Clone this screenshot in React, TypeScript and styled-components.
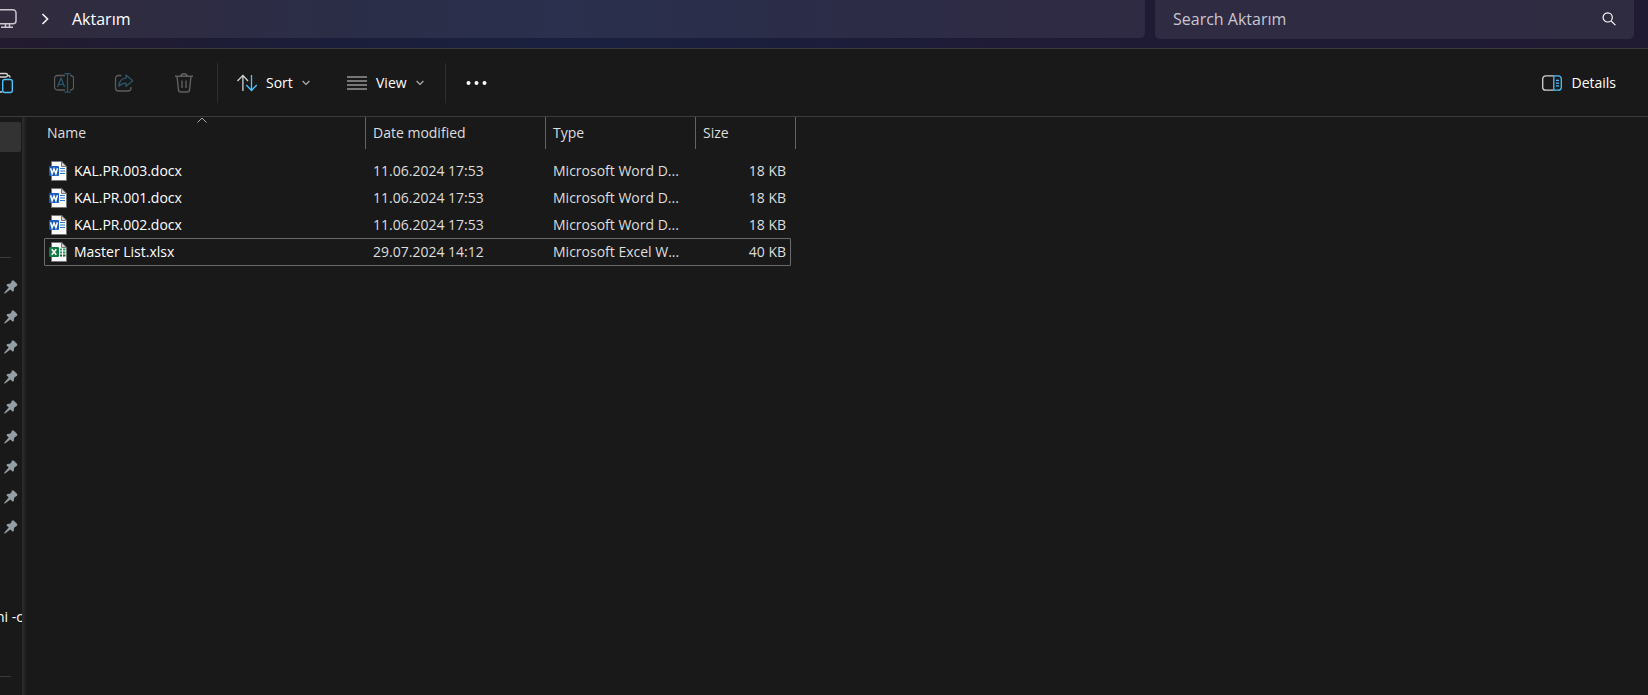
import React from "react";
import styled, { createGlobalStyle } from "styled-components";

const GlobalStyle = createGlobalStyle`
  * { box-sizing: border-box; }
  html, body, #root { height: 100%; }
  body {
    margin: 0;
    background: #191919;
    color: #fff;
    font-family: "Segoe UI", "Open Sans", "Noto Sans", sans-serif;
    font-size: 14px;
    line-height: 20px;
    overflow: hidden;
  }
  button, input { font: inherit; color: inherit; }
`;

const Window = styled.div`
  display: flex;
  flex-direction: column;
  min-height: 100vh;
`;

const TitleBar = styled.header`
  display: flex;
  align-items: flex-start;
  gap: 10px;
  height: 49px;
  padding-right: 14px;
  background: linear-gradient(90deg, #231b2f 0, #1f1c34 10%, #1b1e3a 20%, #1a2140 34%, #1b1e3b 48%, #201b36 62%, #201b33 100%);
  border-bottom: 1px solid #3b3b3d;
`;

const AddressBar = styled.nav`
  display: flex;
  align-items: center;
  flex: 1;
  height: 38px;
  gap: 23px;
  background: rgba(255, 255, 255, 0.07);
  border-radius: 0 0 5px 0;
`;

const Crumb = styled.a`
  color: #fff;
  font-size: 16px;
  line-height: 24px;
  text-decoration: none;
`;

const SearchBox = styled.label`
  display: flex;
  align-items: center;
  flex: 0 0 479px;
  height: 39px;
  padding: 0 18px 2px;
  background: rgba(255, 255, 255, 0.07);
  border-radius: 0 0 5px 5px;
`;

const SearchInput = styled.input`
  flex: 1;
  min-width: 0;
  padding: 0;
  border: 0;
  outline: 0;
  background: transparent;
  font-size: 16px;
  line-height: 24px;
  &::placeholder { color: #c9c7cf; opacity: 1; }
`;

const Toolbar = styled.div`
  display: flex;
  align-items: center;
  height: 68px;
  margin-left: -26px;
  padding-right: 32px;
  border-bottom: 1px solid #3b3b3b;
`;

const IconButton = styled.button`
  display: flex;
  align-items: center;
  justify-content: center;
  width: 60px;
  height: 40px;
  padding: 0;
  border: 0;
  background: transparent;
`;

const MenuButton = styled.button<{ $width?: number }>`
  display: flex;
  align-items: center;
  gap: 9px;
  width: ${(p) => (p.$width ? `${p.$width}px` : "auto")};
  height: 40px;
  padding: 0 0 0 19px;
  border: 0;
  background: transparent;
`;

const Separator = styled.span<{ $gap?: number }>`
  width: 1px;
  height: 40px;
  margin-left: ${(p) => p.$gap ?? 0}px;
  background: #2e2e2e;
`;

const Spacer = styled.span`
  flex: 1;
`;

const Body = styled.div`
  display: flex;
  flex: 1;
`;

const Sidebar = styled.aside`
  width: 22px;
  padding: 5px 1px 0 0;
  overflow: hidden;
`;

const SideItem = styled.div<{ $active?: boolean }>`
  display: flex;
  align-items: center;
  height: 30px;
  padding-left: 4px;
  background: ${(p) => (p.$active ? "#333" : "transparent")};
  border-radius: 0 2px 2px 0;
`;

const SideGap = styled.div<{ $height: number }>`
  height: ${(p) => p.$height}px;
`;

const SideRule = styled.hr`
  width: 11px;
  height: 1px;
  margin: 0;
  border: 0;
  background: #3b3b3b;
`;

const SideLabel = styled.span`
  margin-left: -8px;
  white-space: nowrap;
`;

const Splitter = styled.div`
  width: 4px;
  background: #222;
  border-left: 2px solid #292929;
`;

const Main = styled.main`
  flex: 1;
  padding-left: 18px;
`;

const FileTable = styled.table`
  width: 752px;
  table-layout: fixed;
  border-collapse: collapse;
  text-align: left;
`;

const HeadCell = styled.th<{ $first?: boolean }>`
  position: relative;
  padding: 0 0 8px;
  color: #dedede;
  font-weight: 400;
  > span {
    display: block;
    height: 32px;
    padding-left: ${(p) => (p.$first ? 3 : 7)}px;
    line-height: 32px;
    border-right: 1px solid #636363;
  }
`;

const SortMark = styled.svg`
  position: absolute;
  top: 0;
  left: calc(50% - 8px);
`;

const Row = styled.tr<{ $focused?: boolean }>`
  position: relative;
  height: 27px;
  ${(p) =>
    p.$focused &&
    `&::after {
      content: "";
      position: absolute;
      inset: 0 5px -1px 0;
      border: 1px solid #6b6b6b;
      border-radius: 1px;
      pointer-events: none;
    }`}
`;

const Cell = styled.td<{ $right?: boolean }>`
  padding: 0 ${(p) => (p.$right ? 10 : 12)}px 0 7px;
  color: #dedede;
  line-height: 20px;
  text-align: ${(p) => (p.$right ? "right" : "left")};
  overflow: hidden;
  white-space: nowrap;
`;

const NameCell = styled(Cell)`
  padding: 0 0 0 5px;
  color: #fff;
`;

const FileName = styled.span`
  display: flex;
  align-items: center;
  gap: 6px;
`;

const GREY = "#d4d4d4";
const BLUE = "#4cc2ff";

const MonitorIcon = () => (
  <svg width="18" height="20" viewBox="0 0 18 20" fill="none" stroke="#c9c7cf" strokeWidth="1.5" aria-hidden="true">
    <path d="M0 .8h13a3 3 0 0 1 3 3v8a3 3 0 0 1-3 3H0M5.5 15v3M9.5 15v3M1 18.2h12" />
  </svg>
);

const CrumbArrow = () => (
  <svg width="8" height="12" viewBox="0 0 8 12" fill="none" stroke="#f2f2f2" strokeWidth="1.7" aria-hidden="true">
    <path d="M1.5 1l5 5-5 5" />
  </svg>
);

const SearchIcon = () => (
  <svg width="14" height="14" viewBox="0 0 14 14" fill="none" stroke="#fff" strokeWidth="1.2" aria-hidden="true">
    <circle cx="5.7" cy="5.4" r="4.6" />
    <path d="M9 8.8l4.4 4.4" />
  </svg>
);

const PasteIcon = () => (
  <svg width="20" height="22" viewBox="0 0 20 22" fill="none" strokeWidth="1.4" aria-hidden="true">
    <path stroke={GREY} d="M5 3.5H3a2 2 0 0 0-2 2V18a2 2 0 0 0 2 2h5M14 3.500c1.300 0 2 .8 2 2" />
    <rect x="5" y="1.500" width="8.500" height="3.500" rx="1.700" stroke={GREY} />
    <rect x="8.700" y="7.500" width="9.600" height="13" rx="2" stroke={BLUE} />
  </svg>
);

const RenameIcon = () => (
  <svg width="20" height="20" viewBox="0 0 20 20" fill="none" strokeWidth="1.300" aria-hidden="true">
    <path stroke="#5d5d5d" d="M11 2.500H3.500a3 3 0 0 0-3 3v8.500a3 3 0 0 0 3 3H11M16 2.500h.6a3 3 0 0 1 3 3v8.500a3 3 0 0 1-3 3H16" />
    <path stroke="#2b566b" d="M10.500.7h6M10.500 19.200h6M13.500.7v18.500" />
    <path stroke="#2b566b" d="M3.500 14L6.900 5.200h.3L10.600 14M4.700 11.300h4.700" />
  </svg>
);

const ShareIcon = () => (
  <svg width="20" height="20" viewBox="0 0 20 20" fill="none" strokeWidth="1.300" strokeLinejoin="round" aria-hidden="true">
    <path stroke="#5d5d5d" d="M7.500 2.500H4.500a3 3 0 0 0-3 3v9.500a3 3 0 0 0 3 3h9.500a3 3 0 0 0 3-3V14" />
    <path stroke="#2b566b" d="M12 2l6.700 5.700L12 13.300V10.200c-3.200 0-5.300 1-7.200 3 .3-4.500 2.500-7.700 7.200-8z" />
  </svg>
);

const TrashIcon = () => (
  <svg width="20" height="20" viewBox="0 0 20 20" fill="none" stroke="#606060" strokeWidth="1.400" aria-hidden="true">
    <path d="M1 3.300h18M7 3.300C7 1.600 8.300.8 10 .8s3 .8 3 2.500M3 3.300l1.500 13.500a2.500 2.500 0 0 0 2.400 2.200h6.200a2.500 2.500 0 0 0 2.400-2.200L17 3.300M8 7.500v7.500M12 7.500v7.500" />
  </svg>
);

const SortIcon = () => (
  <svg width="20" height="18" viewBox="0 0 20 18" fill="none" strokeWidth="1.300" aria-hidden="true">
    <path stroke={GREY} d="M.5 7L5.900 1.400 11 7M5.900 1.400V17" />
    <path stroke={BLUE} d="M9.300 11l5.200 5.500L19.700 11M14.500 16.500V1" />
  </svg>
);

const ViewIcon = () => (
  <svg width="20" height="14" viewBox="0 0 20 14" stroke={GREY} strokeWidth="1.200" aria-hidden="true">
    <path d="M0 1h20M0 5h20M0 9h20M0 13h20" />
  </svg>
);

const Chevron = () => (
  <svg width="8" height="6" viewBox="0 0 8 6" fill="none" stroke="#b0b0b0" strokeWidth="1.200" aria-hidden="true">
    <path d="M.6 1L4 4.500 7.400 1" />
  </svg>
);

const MoreIcon = () => (
  <svg width="21" height="4" viewBox="0 0 21 4" fill="#fff" aria-hidden="true">
    <circle cx="2.500" cy="2" r="2" />
    <circle cx="10.500" cy="2" r="2" />
    <circle cx="18.500" cy="2" r="2" />
  </svg>
);

const DetailsIcon = () => (
  <svg width="20" height="16" viewBox="0 0 20 16" fill="none" strokeWidth="1.300" aria-hidden="true">
    <path stroke={GREY} d="M11.500.8H3.700a3 3 0 0 0-3 3v8.400a3 3 0 0 0 3 3h7.800" />
    <path stroke={BLUE} d="M11.800.8h4.500a3 3 0 0 1 3 3v8.400a3 3 0 0 1-3 3h-4.500zM14 5.300h3M14 8.100h3M14 10.900h3" />
  </svg>
);

const PinIcon = () => (
  <svg width="14" height="14" viewBox="0 0 14 14" fill="#949ea5" aria-hidden="true">
    <path d="M8 .4h1.600l3.600 3.700v1.500l-1.200.9-1.200.5-.9 1.700v2l-1 1L6.300 9.400 1 13.600l-.8-.2.2-.8 4.300-5L2.400 5.200l.9-1.200 2.300-.2L7 2.900z" />
  </svg>
);

const Page = () => (
  <>
    <path d="M2.500.5h10.200l4.800 4.800v14.200h-15z" fill="#fbfbfb" stroke="#777" />
    <path d="M12.500.5v5h5z" fill="#d0d0d0" stroke="#777" />
  </>
);

const WordIcon = () => (
  <svg width="19" height="20" viewBox="0 0 19 20" aria-hidden="true">
    <Page />
    <path d="M11 7.500h5M11 10h5M11 12.500h5" stroke="#2b7cd3" strokeWidth="1.100" />
    <rect y="5" width="10" height="10" rx="1" fill="#185abd" />
    <path d="M1.600 7.300l1.500 5.300L5 8l1.900 4.600 1.500-5.300" fill="none" stroke="#fff" strokeWidth="1.500" />
  </svg>
);

const ExcelIcon = () => (
  <svg width="19" height="20" viewBox="0 0 19 20" aria-hidden="true">
    <Page />
    <path d="M11 7.500h2M14 7.500h2.500M11 10.500h2M14 10.500h2.500" stroke="#21a366" strokeWidth="2" />
    <path d="M11 13.500h2M14 13.500h2.500" stroke="#185c37" strokeWidth="2" />
    <rect y="5" width="10" height="10" rx="1" fill="#107c41" />
    <path d="M2.700 7.200l4.600 5.600M7.300 7.200l-4.600 5.600" stroke="#fff" strokeWidth="1.600" />
  </svg>
);

type FileEntry = { name: string; date: string; type: string; size: string; kind: "word" | "excel"; focused?: boolean };

const files: FileEntry[] = [
  { name: "KAL.PR.003.docx", date: "11.06.2024 17:53", type: "Microsoft Word D...", size: "18 KB", kind: "word" },
  { name: "KAL.PR.001.docx", date: "11.06.2024 17:53", type: "Microsoft Word D...", size: "18 KB", kind: "word" },
  { name: "KAL.PR.002.docx", date: "11.06.2024 17:53", type: "Microsoft Word D...", size: "18 KB", kind: "word" },
  { name: "Master List.xlsx", date: "29.07.2024 14:12", type: "Microsoft Excel W...", size: "40 KB", kind: "excel", focused: true },
];

const PINNED_COUNT = 9;

export default function App() {
  return (
    <Window>
      <GlobalStyle />
      <TitleBar>
        <AddressBar aria-label="Address">
          <MonitorIcon />
          <CrumbArrow />
          <Crumb href="#">Aktarım</Crumb>
        </AddressBar>
        <SearchBox>
          <SearchInput type="text" placeholder="Search Aktarım" aria-label="Search Aktarım" />
          <SearchIcon />
        </SearchBox>
      </TitleBar>

      <Toolbar role="toolbar">
        <IconButton aria-label="Paste"><PasteIcon /></IconButton>
        <IconButton aria-label="Rename" disabled><RenameIcon /></IconButton>
        <IconButton aria-label="Share" disabled><ShareIcon /></IconButton>
        <IconButton aria-label="Delete" disabled><TrashIcon /></IconButton>
        <Separator $gap={3} />
        <MenuButton $width={110}><SortIcon />Sort<Chevron /></MenuButton>
        <MenuButton $width={117}><ViewIcon />View<Chevron /></MenuButton>
        <Separator />
        <IconButton aria-label="See more"><MoreIcon /></IconButton>
        <Spacer />
        <MenuButton><DetailsIcon />Details</MenuButton>
      </Toolbar>

      <Body>
        <Sidebar>
          <SideItem $active />
          <SideGap $height={105} />
          <SideRule />
          <SideGap $height={14} />
          {Array.from({ length: PINNED_COUNT }, (_, i) => (
            <SideItem key={i}><PinIcon /></SideItem>
          ))}
          <SideGap $height={60} />
          <SideItem><SideLabel>ni -c</SideLabel></SideItem>
          <SideGap $height={44} />
          <SideRule />
        </Sidebar>
        <Splitter />
        <Main>
          <FileTable>
            <colgroup>
              <col style={{ width: 322 }} />
              <col style={{ width: 180 }} />
              <col style={{ width: 150 }} />
              <col style={{ width: 100 }} />
            </colgroup>
            <thead>
              <tr>
                <HeadCell $first>
                  <span>Name</span>
                  <SortMark width="10" height="6" viewBox="0 0 10 6" fill="none" stroke="#aaa">
                    <path d="M.5 5.500L5 1l4.500 4.500" />
                  </SortMark>
                </HeadCell>
                <HeadCell><span>Date modified</span></HeadCell>
                <HeadCell><span>Type</span></HeadCell>
                <HeadCell><span>Size</span></HeadCell>
              </tr>
            </thead>
            <tbody>
              {files.map((f) => (
                <Row key={f.name} $focused={f.focused}>
                  <NameCell>
                    <FileName>
                      {f.kind === "word" ? <WordIcon /> : <ExcelIcon />}
                      <span>{f.name}</span>
                    </FileName>
                  </NameCell>
                  <Cell>{f.date}</Cell>
                  <Cell>{f.type}</Cell>
                  <Cell $right>{f.size}</Cell>
                </Row>
              ))}
            </tbody>
          </FileTable>
        </Main>
      </Body>
    </Window>
  );
}
